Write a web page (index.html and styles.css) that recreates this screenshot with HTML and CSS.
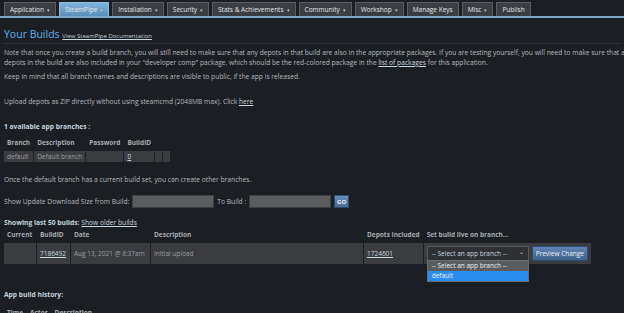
FILE: index.html
```html
<!DOCTYPE html>
<html lang="en">

<head>
    <meta charset="UTF-8">
    <meta name="viewport" content="width=device-width, initial-scale=1.0">
    <title>Your Builds</title>
    <link rel="stylesheet" href="styles.css">
</head>

<body>
    <!-- top tabs -->
    <nav class="tabs">
        <span class="tab">Application <i class="caret">&#9662;</i></span>
        <span class="tab active">SteamPipe <i class="caret">&#9662;</i></span>
        <span class="tab">Installation <i class="caret">&#9662;</i></span>
        <span class="tab">Security <i class="caret">&#9662;</i></span>
        <span class="tab">Stats &amp; Achievements <i class="caret">&#9662;</i></span>
        <span class="tab">Community <i class="caret">&#9662;</i></span>
        <span class="tab">Workshop <i class="caret">&#9662;</i></span>
        <span class="tab">Manage Keys</span>
        <span class="tab">Misc <i class="caret">&#9662;</i></span>
        <span class="tab">Publish</span>
    </nav>

    <main class="content">
        <h1 class="page-title">Your Builds <a href="#" class="doc-link">View SteamPipe Documentation</a></h1>

        <p class="note first">
            Note that once you create a build branch, you will still need to make sure that any depots in that build are also in the appropriate packages. If you are testing yourself, you will need to make sure that all<br>
            depots in the build are also included in your "developer comp" package, which should be the red-colored package in the <a href="#">list of packages</a> for this application.
        </p>
        <p class="note keep">Keep in mind that all branch names and descriptions are visible to public, if the app is released.</p>

        <p class="note upload">Upload depots as ZIP directly without using steamcmd (2048MB max). Click <a href="#">here</a></p>

        <h3 class="section-title">1 available app branches :</h3>

        <!-- branches -->
        <table class="grid branches">
            <tr>
                <th>Branch</th>
                <th>Description</th>
                <th>Password</th>
                <th>BuildID</th>
                <th></th>
                <th></th>
            </tr>
            <tr>
                <td>default</td>
                <td>Default branch</td>
                <td class="pw"></td>
                <td class="bid"><a href="#">0</a></td>
                <td class="narrow"></td>
                <td class="narrow"></td>
            </tr>
        </table>

        <p class="note once">Once the default branch has a current build set, you can create other branches.</p>

        <div class="size-row">
            <span>Show Update Download Size from Build:</span>
            <input type="text" class="build-input">
            <span>To Build :</span>
            <input type="text" class="build-input">
            <button class="go">GO</button>
        </div>

        <h3 class="section-title small">Showing last 50 builds: <a href="#">Show older builds</a></h3>

        <!-- builds -->
        <table class="grid builds">
            <tr>
                <th class="c-current">Current</th>
                <th class="c-id">BuildID</th>
                <th class="c-date">Date</th>
                <th class="c-desc">Description</th>
                <th class="c-depots">Depots Included</th>
                <th class="c-live">Set build live on branch...</th>
            </tr>
            <tr>
                <td></td>
                <td><a href="#">7186492</a></td>
                <td>Aug 13, 2021 @ 8:37am</td>
                <td>Initial upload</td>
                <td><a href="#">1724601</a></td>
                <td class="live-cell">
                    <div class="live-controls">
                        <div class="select-wrap">
                            <div class="fake-select">-- Select an app branch -- <span class="chev">&#8964;</span></div>
                            <ul class="dropdown">
                                <li class="opt">-- Select an app branch --</li>
                                <li class="opt picked">default</li>
                            </ul>
                        </div>
                        <button class="preview">Preview Change</button>
                    </div>
                </td>
            </tr>
        </table>

        <h3 class="section-title history">App build history:</h3>

        <table class="grid history-table">
            <tr>
                <th>Time</th>
                <th>Actor</th>
                <th>Description</th>
            </tr>
        </table>
    </main>
</body>

</html>
```

FILE: styles.css
```css
* {
    box-sizing: border-box;
    margin: 0;
    padding: 0;
}

body {
    width: 624px;
    height: 313px;
    overflow: hidden;
    background-color: #1b1e23;
    color: #b4b9be;
    font-family: 'Open Sans', 'Liberation Sans', Arial, sans-serif;
    font-size: 6.7px;
    line-height: 10px;
}

a {
    color: #c6d4df;
}

/* tabs */

.tabs {
    display: flex;
    gap: 3px;
    padding: 2px 4px 0;
    height: 18px;
    border-bottom: 2px solid #7ea8c8;
}

.tab {
    display: flex;
    align-items: center;
    gap: 3px;
    height: 14px;
    padding: 0 5px;
    background-color: #3a3d42;
    border: 1px solid #5a5d62;
    border-bottom: none;
    color: #e4e7ea;
    font-size: 6.5px;
    white-space: nowrap;
}

.tab.active {
    background: linear-gradient(#7fb3da, #5b8fba);
    border-color: #8fbfe0;
}

.caret {
    font-style: normal;
    font-size: 5px;
    color: #b9c0c6;
}

/* page */

.content {
    padding: 0 4px;
}

.page-title {
    margin-top: 8px;
    height: 18px;
    line-height: 17px;
    border-bottom: 1px solid #2f3238;
    color: #5eb6ea;
    font-size: 10.5px;
    font-weight: 400;
}

.doc-link {
    font-size: 6px;
    color: #c6d4df;
}

.note {
    white-space: nowrap;
}

.first {
    margin-top: 4px;
}

.keep {
    margin-top: 4px;
}

.upload {
    margin-top: 15px;
}

.section-title {
    margin-top: 15px;
    font-size: 6.7px;
    font-weight: 700;
    color: #c6d4df;
}

.section-title.small {
    margin-top: 10px;
}

.section-title a {
    font-weight: 400;
}

/* tables */

.grid {
    border-spacing: 1px;
    margin-left: -1px;
}

.grid th {
    padding: 2px 3px;
    height: 14px;
    text-align: left;
    font-weight: 700;
    font-size: 6.5px;
    color: #a8adb2;
    white-space: nowrap;
}

.grid td {
    height: 11px;
    padding: 0 3px;
    background-color: #3a3c40;
    color: #9a9fa4;
    font-size: 6.5px;
    white-space: nowrap;
}

.branches {
    margin-top: 3px;
}

.branches .pw {
    width: 36px;
}

.branches .bid {
    width: 30px;
}

.branches .narrow {
    width: 7px;
    padding: 0;
}

.once {
    margin-top: 12px;
}

.size-row {
    display: flex;
    align-items: center;
    gap: 3px;
    margin-top: 10px;
}

.build-input {
    width: 82px;
    height: 13px;
    background-color: #5b5c5f;
    border: 1px solid #3e3f42;
}

.go {
    width: 15px;
    height: 13px;
    background: linear-gradient(#6a8cb8, #46698f);
    border: 1px solid #2f4a6a;
    color: #e8eef4;
    font-family: inherit;
    font-size: 6px;
    font-weight: 700;
}

.builds {
    width: 589px;
    margin-top: -1px;
}

.builds td {
    height: 21px;
}

.c-current {
    width: 32px;
}

.c-id {
    width: 33px;
}

.c-date {
    width: 79px;
}

.c-depots {
    width: 58px;
}

.c-live {
    width: 166px;
}

.live-cell {
    padding: 0 3px;
}

.live-controls {
    display: flex;
    align-items: center;
    gap: 3px;
}

.select-wrap {
    position: relative;
}

.fake-select {
    display: flex;
    align-items: center;
    justify-content: space-between;
    width: 102px;
    height: 15px;
    padding: 0 4px;
    background-color: #2e3034;
    border: 1px solid #55585c;
    color: #c6d4df;
}

.chev {
    font-size: 6px;
    margin-top: -3px;
}

.dropdown {
    position: absolute;
    top: 14px;
    left: 0;
    width: 102px;
    list-style: none;
    border: 1px solid #6a6c70;
    background-color: #2e3034;
    z-index: 2;
}

.opt {
    height: 10px;
    line-height: 10px;
    padding: 0 4px;
    background-color: #5a5c60;
    color: #f0f0f0;
}

.opt.picked {
    background-color: #2a8ef0;
}

.preview {
    height: 15px;
    padding: 0 3px;
    background: linear-gradient(#6183b3, #3e618c);
    border: 1px solid #2f4a6a;
    color: #e8eef4;
    font-family: inherit;
    font-size: 6.5px;
}

.history {
    margin-top: 25px;
}

.history-table {
    margin-top: 5px;
}
```
